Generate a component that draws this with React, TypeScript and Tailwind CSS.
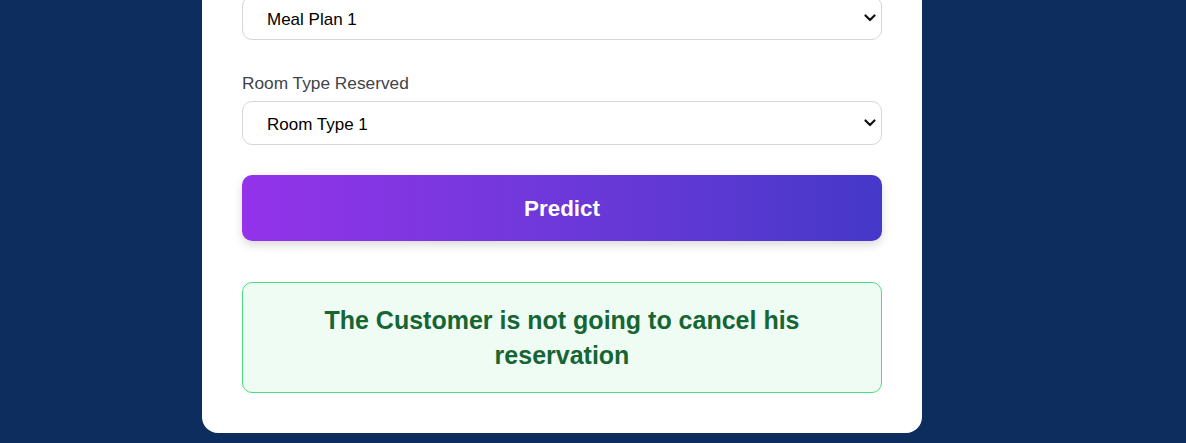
import { useState } from 'react'

const Chevron = () => (
  <svg
    className="pointer-events-none absolute right-[6px] top-1/2 -translate-y-1/2"
    width="12"
    height="8"
    viewBox="0 0 12 8"
    fill="none"
  >
    <path d="M1.5 1.5 6 6l4.5-4.5" stroke="#111" strokeWidth="2.2" strokeLinecap="round" strokeLinejoin="round" />
  </svg>
)

const SelectField = ({
  label,
  value,
  options,
  onChange,
  className = '',
}: {
  label?: string
  value: string
  options: string[]
  onChange: (v: string) => void
  className?: string
}) => (
  <div className={className}>
    {label && <label className="block text-[17.3px] leading-[20px] text-[#3f434a] mb-2">{label}</label>}
    <div className="relative">
      <select
        value={value}
        onChange={(e) => onChange(e.target.value)}
        className="block w-full h-[44px] appearance-none rounded-[10px] border border-[#d4d6dc] bg-white pl-6 pr-8 pt-[3px] text-[17px] text-black outline-none"
      >
        {options.map((o) => (
          <option key={o}>{o}</option>
        ))}
      </select>
      <Chevron />
    </div>
  </div>
)

export default function App() {
  const [meal, setMeal] = useState('Meal Plan 1')
  const [room, setRoom] = useState('Room Type 1')

  return (
    <div className="h-[443px] overflow-hidden bg-[#0c2d5d] font-['Liberation_Sans',Arial,sans-serif]">
      <div className="ml-[202px] mt-[-44px] w-[720px] rounded-2xl bg-white px-10 pt-10 pb-10">
        <SelectField
          value={meal}
          onChange={setMeal}
          options={['Meal Plan 1', 'Meal Plan 2', 'Meal Plan 3', 'Not Selected']}
        />
        <SelectField
          className="mt-[33px]"
          label="Room Type Reserved"
          value={room}
          onChange={setRoom}
          options={['Room Type 1', 'Room Type 2', 'Room Type 3', 'Room Type 4', 'Room Type 5', 'Room Type 6', 'Room Type 7']}
        />

        <button className="mt-[30px] flex h-[66px] w-full items-center justify-center rounded-[10px] bg-linear-to-r from-[#9333ea] to-[#4538c9] pt-[2px] text-[22.4px] font-bold text-white shadow-[0_4px_10px_rgba(0,0,0,0.15)]">
          Predict
        </button>

        <div className="mt-[41px] rounded-[10px] border border-[#4ade80] bg-[#effcf3] px-5 pt-5 pb-[19px] text-center text-[25px] leading-[35px] font-bold text-[#166534]">
          The Customer is not going to cancel his reservation
        </div>
      </div>
    </div>
  )
}
